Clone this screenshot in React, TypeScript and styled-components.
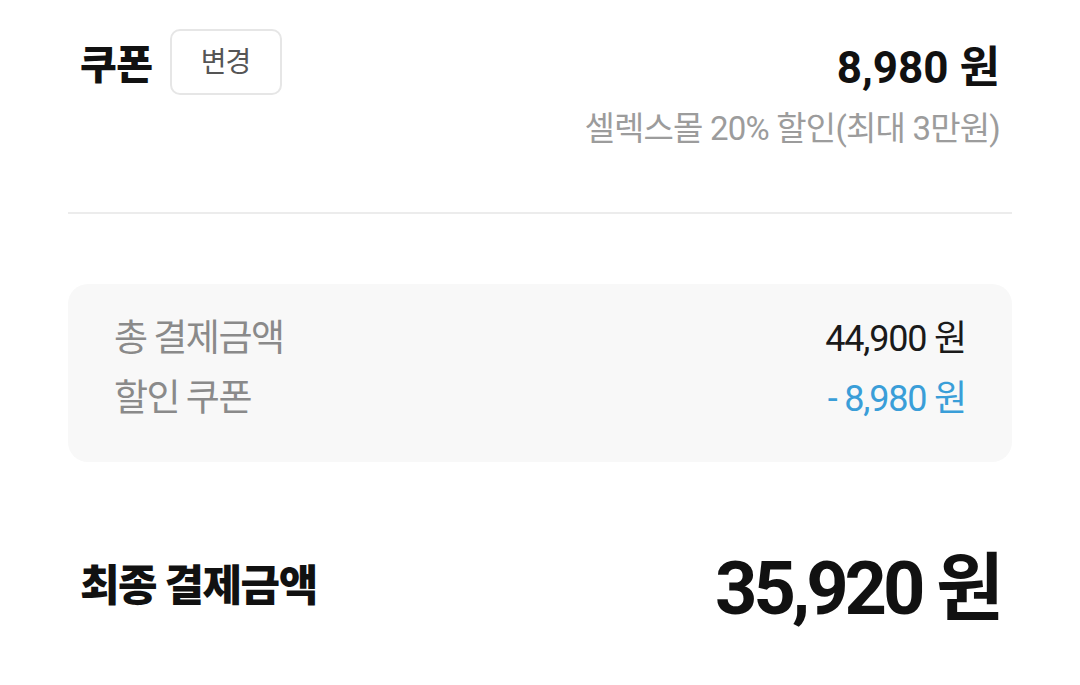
import styled, { createGlobalStyle } from "styled-components";

const GlobalStyle = createGlobalStyle`
    html, body {
        margin: 0;
        padding: 0;
        background: #ffffff;
    }
    body {
        font-family: Roboto, "Noto Sans CJK KR", sans-serif;
        color: #111111;
    }
`

const App = () => {
    return (
        <>
            <GlobalStyle />
            <Page>
                <CouponSection>
                    <CouponHead>
                        <TitleWrapper>
                            <Title>쿠폰</Title>
                            <ChangeButton>변경</ChangeButton>
                        </TitleWrapper>
                        <CouponPrice>8,980 원</CouponPrice>
                    </CouponHead>
                    <CouponDesc>셀렉스몰 20% 할인(최대 3만원)</CouponDesc>
                </CouponSection>
                <Divider />
                <SummaryBox>
                    <SummaryRow>
                        <SummaryLabel>총 결제금액</SummaryLabel>
                        <SummaryValue>44,900 원</SummaryValue>
                    </SummaryRow>
                    <SummaryRow>
                        <SummaryLabel>할인 쿠폰</SummaryLabel>
                        <SummaryValue $discount>- 8,980 원</SummaryValue>
                    </SummaryRow>
                </SummaryBox>
                <TotalRow>
                    <TotalLabel>최종 결제금액</TotalLabel>
                    <TotalPrice>35,920 원</TotalPrice>
                </TotalRow>
            </Page>
        </>
    )
}

export default App

const Page = styled.div`
    width: 1080px;
    height: 685px;
    box-sizing: border-box;
    padding: 28px 68px 0;
    overflow: hidden;
`
const CouponSection = styled.div`
    padding: 0 12px 0;
`
const CouponHead = styled.div`
    display: flex;
    justify-content: space-between;
    align-items: center;
`
const TitleWrapper = styled.div`
    display: flex;
    align-items: center;
    gap: 17px;
`
const Title = styled.h2`
    font-family: "Noto Sans CJK KR", sans-serif;
    font-size: 40px;
    font-weight: 900;
    letter-spacing: -0.5px;
    margin: 0;
    color: #111111;
`
const ChangeButton = styled.button`
    width: 112px;
    height: 66px;
    box-sizing: border-box;
    border: 2px solid #e6e6e6;
    border-radius: 10px;
    background: #ffffff;
    font-family: "Noto Sans CJK KR", sans-serif;
    font-size: 28px;
    color: #555555;
    letter-spacing: -1px;
    padding: 0 0 4px;
`
const CouponPrice = styled.p`
    font-family: Roboto, "Noto Sans CJK KR", sans-serif;
    font-size: 44px;
    font-weight: 700;
    margin: 4px 0 0;
    color: #111111;
`
const CouponDesc = styled.p`
    font-family: Roboto, "Noto Sans CJK KR", sans-serif;
    font-size: 33px;
    color: #9c9c9c;
    text-align: right;
    letter-spacing: -0.8px;
    margin: 6px 0 0;
`
const Divider = styled.hr`
    border: none;
    border-top: 2px solid #ececec;
    margin: 62px 0 70px;
`
const SummaryBox = styled.div`
    background: #f8f8f8;
    border-radius: 20px;
    padding: 24px 46px 40px;
    display: flex;
    flex-direction: column;
    gap: 6px;
`
const SummaryRow = styled.div`
    display: flex;
    justify-content: space-between;
    align-items: center;
`
const SummaryLabel = styled.span`
    font-family: "Noto Sans CJK KR", sans-serif;
    font-size: 37px;
    color: #8a8a8a;
    letter-spacing: -1.5px;
`
const SummaryValue = styled.span<{ $discount?: boolean }>`
    font-family: Roboto, "Noto Sans CJK KR", sans-serif;
    font-size: 36px;
    letter-spacing: -1.2px;
    color: ${(p) => (p.$discount ? "#3a9ed8" : "#1a1a1a")};
`
const TotalRow = styled.div`
    display: flex;
    justify-content: space-between;
    align-items: center;
    padding: 66px 12px 0;
`
const TotalLabel = styled.span`
    font-family: "Noto Sans CJK KR", sans-serif;
    font-size: 43px;
    font-weight: 900;
    letter-spacing: -1.5px;
    color: #111111;
`
const TotalPrice = styled.span`
    font-family: Roboto, "Noto Sans CJK KR", sans-serif;
    font-size: 74px;
    font-weight: 700;
    letter-spacing: -4px;
    color: #111111;
`
